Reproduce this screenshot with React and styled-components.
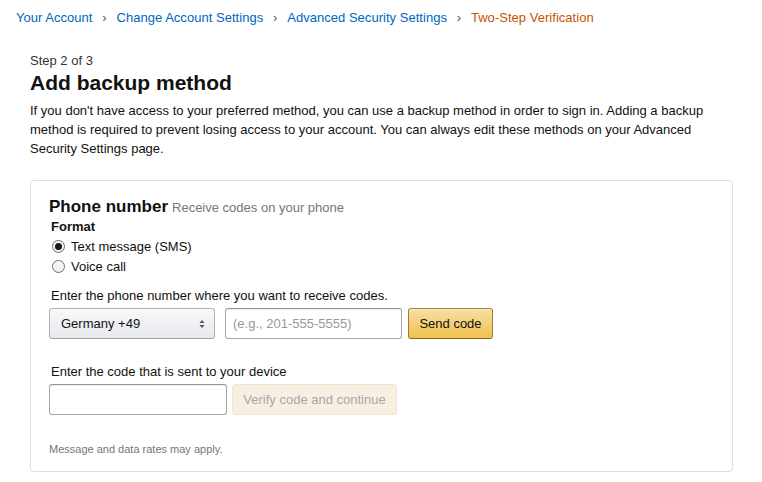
import React from "react";
import styled, { createGlobalStyle } from "styled-components";

const Global = createGlobalStyle`
  html, body { margin: 0; padding: 0; background: #fff; }
  body {
    font-family: "Liberation Sans", Arial, sans-serif;
    font-size: 13px;
    line-height: 19px;
    color: #111;
  }
  * { box-sizing: border-box; }
`;

const Page = styled.div`
  width: 762px;
  padding: 8px 29px 0 0;
`;

const Breadcrumb = styled.nav`
  display: flex;
  align-items: center;
  padding-left: 16px;
  height: 19px;
  letter-spacing: 0.03px;
`;

const Crumb = styled.a`
  color: ${(p) => (p.$current ? "#c45500" : "#0066c0")};
  text-decoration: none;
`;

const Sep = styled.span`
  color: #555;
  font-size: 13px;
  width: 24px;
  text-align: center;
`;

const Content = styled.main`
  padding: 24px 0 0 30px;
`;

const Step = styled.div`
  color: #333;
`;

const Title = styled.h1`
  margin: 0 0 5px;
  font-size: 21px;
  line-height: 26px;
  font-weight: 700;
`;

const Intro = styled.p`
  margin: 0 0 22px;
`;

const Card = styled.section`
  border: 1px solid #ddd;
  border-radius: 4px;
  padding: 16px 18px 14px 18px;
`;

const CardHead = styled.div`
  display: flex;
  align-items: baseline;
  gap: 4px;
`;

const CardTitle = styled.h2`
  margin: 0;
  font-size: 17px;
  line-height: 19px;
  font-weight: 700;
`;

const Hint = styled.span`
  color: #767676;
`;

const Inner = styled.div`
  padding-left: 2px;
`;

const FieldLabel = styled.div`
  font-weight: ${(p) => (p.$bold ? 700 : 400)};
  margin-top: ${(p) => p.$mt || 0}px;
`;

const RadioRow = styled.label`
  display: flex;
  align-items: center;
  height: 20px;
  gap: 6px;
  margin-left: 1px;
`;

const RadioDot = styled.span`
  width: 13px;
  height: 13px;
  border-radius: 50%;
  border: 1px solid #6f6f6f;
  background: linear-gradient(#fdfdfd, #ececec);
  display: flex;
  align-items: center;
  justify-content: center;
  &::after {
    content: "";
    width: 7px;
    height: 7px;
    border-radius: 50%;
    background: ${(p) => (p.$checked ? "#1a1a1a" : "transparent")};
  }
`;

const Row = styled.div`
  display: flex;
  gap: ${(p) => p.$gap || 6}px;
  margin-top: ${(p) => (p.$flat ? 0 : 3)}px;
  margin-left: ${(p) => (p.$flat ? 0 : -2)}px;
`;

const Select = styled.div`
  width: 166px;
  height: 31px;
  border: 1px solid #adb1b8;
  border-bottom-color: #a2a6ac;
  border-radius: 3px;
  background: linear-gradient(#f7f8fa, #e7e9ec);
  box-shadow: 0 1px 0 rgba(255, 255, 255, 0.6) inset;
  display: flex;
  align-items: center;
  justify-content: space-between;
  padding: 0 9px 0 11px;
  color: #111;
`;

const Input = styled.div`
  width: ${(p) => p.$w}px;
  height: 31px;
  border: 1px solid #a6a6a6;
  border-top-color: #949494;
  border-radius: 3px;
  box-shadow: 0 1px 0 rgba(255, 255, 255, 0.5), 0 1px 0 rgba(0, 0, 0, 0.07) inset;
  display: flex;
  align-items: center;
  padding: 0 7px;
  color: #999;
  white-space: nowrap;
`;

const Button = styled.div`
  height: 31px;
  padding: 0;
  border: 1px solid;
  border-radius: 3px;
  display: flex;
  align-items: center;
  justify-content: center;
  white-space: nowrap;
  ${(p) =>
    p.$disabled
      ? `
    background: #f7f0e2;
    border-color: #efe5d0;
    color: #a7a7a7;
  `
      : `
    background: linear-gradient(#f7dfa5, #f0c14b);
    border-color: #a88734 #9c7e31 #846a29;
    color: #111;
    box-shadow: 0 1px 0 rgba(255,255,255,.4) inset;
  `}
  width: ${(p) => p.$w}px;
`;

const Fine = styled.div`
  margin-top: 27px;
  font-size: 11px;
  line-height: 15px;
  color: #767676;
`;

const Arrows = () => (
  <svg width="6" height="10" viewBox="0 0 6 10">
    <path d="M3 1 L5.5 4 H0.5 Z" fill="#555" />
    <path d="M3 9 L5.5 6 H0.5 Z" fill="#555" />
  </svg>
);

export default function App() {
  return (
    <>
      <Global />
      <Page>
        <Breadcrumb>
          <Crumb href="#">Your Account</Crumb>
          <Sep>›</Sep>
          <Crumb href="#">Change Account Settings</Crumb>
          <Sep>›</Sep>
          <Crumb href="#">Advanced Security Settings</Crumb>
          <Sep>›</Sep>
          <Crumb $current>Two-Step Verification</Crumb>
        </Breadcrumb>
        <Content>
          <Step>Step 2 of 3</Step>
          <Title>Add backup method</Title>
          <Intro>
            If you don't have access to your preferred method, you can use a backup method in order to
            sign in. Adding a backup method is required to prevent losing access to your account. You
            can always edit these methods on your Advanced Security Settings page.
          </Intro>
          <Card>
            <CardHead>
              <CardTitle>Phone number</CardTitle>
              <Hint>Receive codes on your phone</Hint>
            </CardHead>
            <Inner>
              <FieldLabel $bold>Format</FieldLabel>
              <RadioRow>
                <RadioDot $checked />
                Text message (SMS)
              </RadioRow>
              <RadioRow>
                <RadioDot />
                Voice call
              </RadioRow>
              <FieldLabel $mt={10}>Enter the phone number where you want to receive codes.</FieldLabel>
              <Row $gap={10}>
                <Select>
                  <span>Germany +49</span>
                  <Arrows />
                </Select>
                <Row $flat $gap={6}>
                  <Input $w={177}>(e.g., 201-555-5555)</Input>
                  <Button $w={85}>Send code</Button>
                </Row>
              </Row>
              <FieldLabel $mt={23}>Enter the code that is sent to your device</FieldLabel>
              <Row $gap={5}>
                <Input $w={178} />
                <Button $disabled $w={165}>Verify code and continue</Button>
              </Row>
            </Inner>
            <Fine>Message and data rates may apply.</Fine>
          </Card>
        </Content>
      </Page>
    </>
  );
}
